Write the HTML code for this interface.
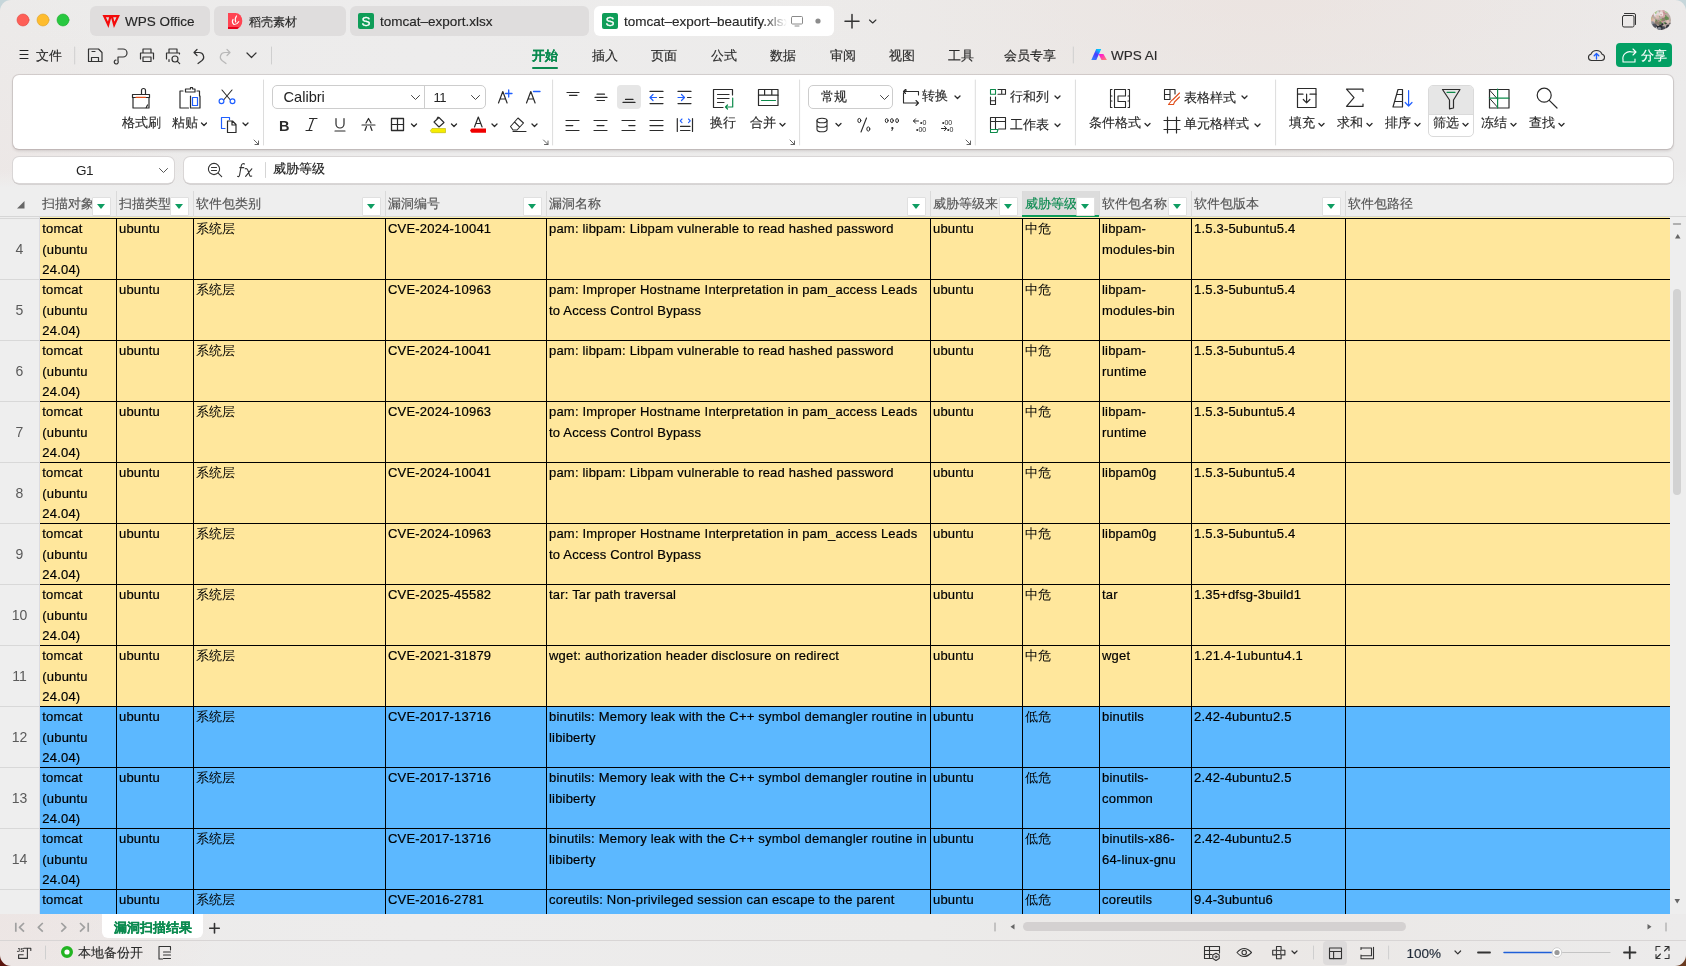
<!DOCTYPE html>
<html><head><meta charset="utf-8">
<style>
*{box-sizing:border-box;margin:0;padding:0}
html,body{width:1686px;height:966px;overflow:hidden}
body{font-family:"Liberation Sans",sans-serif;color:#222;position:relative;background:#c6d6da}
#bgbot{position:absolute;left:0;top:900px;width:1686px;height:66px;background:linear-gradient(90deg,#5a140c,#6a3a20)}
#win{will-change:transform;position:absolute;left:0;top:0;width:1686px;height:966px;border-radius:11px;overflow:hidden;
 background:radial-gradient(ellipse 260px 620px at 0% 62%,rgba(238,214,212,.55),rgba(238,214,212,0)),radial-gradient(ellipse 500px 160px at 75% 0%,rgba(236,224,220,.5),rgba(236,224,220,0)),linear-gradient(90deg,#ecebea 0%,#edecec 25%,#ecebea 55%,#ebe8e6 75%,#ecebeb 100%)}
.a{position:absolute}
.tab{position:absolute;top:6px;height:30px;border-radius:6px;background:#dfdddd}
.tl{position:absolute;top:14px;white-space:nowrap;font-size:13.5px;color:#262626;line-height:16px}
.menu{position:absolute;top:48px;font-size:12.7px;color:#2a2a2a;white-space:nowrap;line-height:16px}
#ribbon{position:absolute;left:13px;top:75px;width:1660px;height:74px;background:#fff;border-radius:6px;box-shadow:0 0 0 1px rgba(60,40,40,.13),0 1.5px 3px rgba(40,20,20,.14)}
.rl{position:absolute;font-size:13px;color:#2a2a2a;white-space:nowrap;line-height:16px}
.sep{position:absolute;width:1px;background:#dcdcdc}
.box{position:absolute;background:#fff;border:1px solid #cdcdcd;border-radius:5px}
.fbox{position:absolute;background:#fff;border-radius:6px;box-shadow:0 0 0 1px #d9d6d6,0 1px 0 .5px #bdbaba}
/* grid */
#grid{position:absolute;left:0;top:170px;width:1686px;height:744px;background:linear-gradient(180deg,rgba(238,238,238,0) 0,#eeeeee 18px)}
.hd{position:absolute;top:191px;height:26px;border-left:1px solid #dadada;font-size:13.3px;color:#555;line-height:16px}
.hd .ht{position:absolute;left:2px;top:5px;white-space:nowrap}
.hd.nb{border-left:none}
.hd.sel{background:#dcdcdc;color:#0a8a4f;-webkit-text-stroke:.3px #0a8a4f}
.hd.sel:after{content:"";position:absolute;left:-1px;right:0;bottom:0;height:2px;background:#0c9a5c}
.hd .fb{z-index:2}
.fb{position:absolute;top:6px;width:18.5px;height:18.5px;margin-left:-.7px;background:#fff;border:1px solid #e0e0e0;border-radius:1px}
.fb i{position:absolute;left:3.8px;top:6px;width:0;height:0;border-left:4.8px solid transparent;border-right:4.8px solid transparent;border-top:5.6px solid #0f9d62}
.rn{position:absolute;left:0;width:39px;border-top:1px solid #d8d8d8;font-size:14px;color:#5a5a5a;display:flex;align-items:center;justify-content:center}
.c{position:absolute;border-top:1px solid #000;border-left:1px solid #000;overflow:hidden}
.c.first{border-left:none}
.c .t.cj{-webkit-text-stroke:0}
.l2{position:relative;top:.4px}
.c.first .t{left:2.3px}
.c.y{background:#ffe79c}
.c.b{background:#5cb8ff}
.c .t{-webkit-text-stroke:.2px #000;position:absolute;left:2px;top:-.2px;font-size:13px;letter-spacing:.2px;line-height:20.6px;color:#000;white-space:nowrap}
.rl,.menu,.tl,.hd .ht{-webkit-text-stroke:.15px currentColor}
svg.ic{position:absolute;left:0;top:0;width:1686px;height:966px;overflow:visible}
</style></head><body><div id="bgbot"></div><div id="win">
<!-- ================= title bar ================= -->
<div class="tab" style="left:90px;width:120px"></div>
<div class="tab" style="left:214px;width:132px"></div>
<div class="tab" style="left:350px;width:239px"></div>
<div class="tab" style="left:594px;width:240px;background:#fff"></div>
<div class="tl" style="left:125px">WPS Office</div>
<div class="tl" style="left:249px;font-size:12.35px;top:14px">稻壳素材</div>
<div class="tl" style="left:380px">tomcat–export.xlsx</div>
<div class="tl" style="left:624px;width:163px;overflow:hidden;-webkit-mask-image:linear-gradient(90deg,#000 85%,transparent)">tomcat–export–beautify.xlsx</div>
<!-- ================= menu row ================= -->
<div class="menu" style="left:36px">文件</div>
<div class="menu" style="left:532px;color:#0a8a4f;font-weight:bold">开始</div>
<div class="a" style="left:532px;top:66.5px;width:26px;height:2.5px;background:#0a8a4f;border-radius:2px"></div>
<div class="menu" style="left:592px">插入</div>
<div class="menu" style="left:651px">页面</div>
<div class="menu" style="left:711px">公式</div>
<div class="menu" style="left:770px">数据</div>
<div class="menu" style="left:830px">审阅</div>
<div class="menu" style="left:889px">视图</div>
<div class="menu" style="left:948px">工具</div>
<div class="menu" style="left:1004px">会员专享</div>
<div class="menu" style="left:1111px;top:47.5px;font-size:13.5px">WPS AI</div>
<div class="a" style="left:1616px;top:43px;width:56px;height:24px;border-radius:4px;background:#03a064"></div>
<div class="menu" style="left:1641px;color:#fff">分享</div>
<!-- ================= ribbon ================= -->
<div id="ribbon"></div>
<div class="box" style="left:272px;top:85px;width:214px;height:24px"></div>
<div class="a" style="left:424px;top:86px;width:1px;height:22px;background:#cdcdcd"></div>
<div class="a" style="left:283.5px;top:88.5px;font-size:14.6px;color:#222">Calibri</div>
<div class="a" style="left:433.5px;top:90px;font-size:13px;color:#222;letter-spacing:-.6px">11</div>
<div class="a" style="left:617px;top:85px;width:24px;height:24px;border-radius:4px;background:#e6e6e6"></div>
<div class="box" style="left:808px;top:85px;width:85px;height:24px"></div>
<div class="rl" style="left:821px;top:89px">常规</div>
<div class="a" style="left:1428px;top:85px;width:46px;height:52px;border-radius:5px;border:1px solid #dadada;overflow:hidden;background:#fff"><div style="height:29px;background:#e6e6e6;border-bottom:1px solid #dadada"></div></div>
<div class="rl" style="left:122px;top:115px">格式刷</div>
<div class="rl" style="left:172px;top:115px">粘贴</div>
<div class="rl" style="left:710px;top:115px">换行</div>
<div class="rl" style="left:750px;top:115px">合并</div>
<div class="rl" style="left:922px;top:88px">转换</div>
<div class="rl" style="left:1010px;top:89px">行和列</div>
<div class="rl" style="left:1010px;top:117px">工作表</div>
<div class="rl" style="left:1089px;top:115px">条件格式</div>
<div class="rl" style="left:1184px;top:89.5px">表格样式</div>
<div class="rl" style="left:1184px;top:116px">单元格样式</div>
<div class="rl" style="left:1289px;top:115px">填充</div>
<div class="rl" style="left:1337px;top:115px">求和</div>
<div class="rl" style="left:1385px;top:115px">排序</div>
<div class="rl" style="left:1433px;top:115px">筛选</div>
<div class="rl" style="left:1481px;top:115px">冻结</div>
<div class="rl" style="left:1529px;top:115px">查找</div>
<div id="grid"></div>
<!-- ================= formula bar ================= -->
<div class="fbox" style="left:13px;top:157px;width:161px;height:26px"></div>
<div class="a" style="left:76px;top:163px;font-size:13.5px;color:#222;letter-spacing:-.5px">G1</div>
<div class="fbox" style="left:184px;top:157px;width:1489px;height:26px"></div>
<div class="rl" style="left:273px;top:161px;font-size:13px;color:#1a1a1a">威胁等级</div>
<!-- ================= grid ================= -->
<div class="a" style="left:0;top:216px;width:1686px;height:1px;background:#d6d6d6"></div>
<div class="a" style="left:0;top:0;width:1686px;height:914px;overflow:hidden">
<div class="hd nb" style="left:40px;width:76px"><span class="ht">扫描对象</span><span class="fb" style="left:53px"><i></i></span></div>
<div class="hd" style="left:116px;width:77px"><span class="ht">扫描类型</span><span class="fb" style="left:54px"><i></i></span></div>
<div class="hd" style="left:193px;width:192px"><span class="ht">软件包类别</span><span class="fb" style="left:169px"><i></i></span></div>
<div class="hd" style="left:385px;width:161px"><span class="ht">漏洞编号</span><span class="fb" style="left:138px"><i></i></span></div>
<div class="hd" style="left:546px;width:384px"><span class="ht">漏洞名称</span><span class="fb" style="left:361px"><i></i></span></div>
<div class="hd" style="left:930px;width:92px"><span class="ht">威胁等级来</span><span class="fb" style="left:69px"><i></i></span></div>
<div class="hd sel" style="left:1022px;width:77px"><span class="ht">威胁等级</span><span class="fb" style="left:54px"><i></i></span></div>
<div class="hd" style="left:1099px;width:92px"><span class="ht">软件包名称</span><span class="fb" style="left:69px"><i></i></span></div>
<div class="hd" style="left:1191px;width:154px"><span class="ht">软件包版本</span><span class="fb" style="left:131px"><i></i></span></div>
<div class="hd" style="left:1345px;width:324px"><span class="ht">软件包路径</span></div>
<div class="rn" style="top:218px;height:61px">4</div>
<div class="c y first" style="left:40px;top:218px;width:76px;height:61px"><div class="t">tomcat<br><span class="l2">(ubuntu</span><br>24.04)</div></div>
<div class="c y" style="left:116px;top:218px;width:77px;height:61px"><div class="t">ubuntu</div></div>
<div class="c y" style="left:193px;top:218px;width:192px;height:61px"><div class="t cj">系统层</div></div>
<div class="c y" style="left:385px;top:218px;width:161px;height:61px"><div class="t">CVE-2024-10041</div></div>
<div class="c y" style="left:546px;top:218px;width:384px;height:61px"><div class="t">pam: libpam: Libpam vulnerable to read hashed password</div></div>
<div class="c y" style="left:930px;top:218px;width:92px;height:61px"><div class="t">ubuntu</div></div>
<div class="c y" style="left:1022px;top:218px;width:77px;height:61px"><div class="t cj">中危</div></div>
<div class="c y" style="left:1099px;top:218px;width:92px;height:61px"><div class="t">libpam-<br><span class="l2">modules-bin</span></div></div>
<div class="c y" style="left:1191px;top:218px;width:154px;height:61px"><div class="t">1.5.3-5ubuntu5.4</div></div>
<div class="c y" style="left:1345px;top:218px;width:325px;height:61px"><div class="t"></div></div>
<div class="rn" style="top:279px;height:61px">5</div>
<div class="c y first" style="left:40px;top:279px;width:76px;height:61px"><div class="t">tomcat<br><span class="l2">(ubuntu</span><br>24.04)</div></div>
<div class="c y" style="left:116px;top:279px;width:77px;height:61px"><div class="t">ubuntu</div></div>
<div class="c y" style="left:193px;top:279px;width:192px;height:61px"><div class="t cj">系统层</div></div>
<div class="c y" style="left:385px;top:279px;width:161px;height:61px"><div class="t">CVE-2024-10963</div></div>
<div class="c y" style="left:546px;top:279px;width:384px;height:61px"><div class="t">pam: Improper Hostname Interpretation in pam_access Leads<br><span class="l2">to Access Control Bypass</span></div></div>
<div class="c y" style="left:930px;top:279px;width:92px;height:61px"><div class="t">ubuntu</div></div>
<div class="c y" style="left:1022px;top:279px;width:77px;height:61px"><div class="t cj">中危</div></div>
<div class="c y" style="left:1099px;top:279px;width:92px;height:61px"><div class="t">libpam-<br><span class="l2">modules-bin</span></div></div>
<div class="c y" style="left:1191px;top:279px;width:154px;height:61px"><div class="t">1.5.3-5ubuntu5.4</div></div>
<div class="c y" style="left:1345px;top:279px;width:325px;height:61px"><div class="t"></div></div>
<div class="rn" style="top:340px;height:61px">6</div>
<div class="c y first" style="left:40px;top:340px;width:76px;height:61px"><div class="t">tomcat<br><span class="l2">(ubuntu</span><br>24.04)</div></div>
<div class="c y" style="left:116px;top:340px;width:77px;height:61px"><div class="t">ubuntu</div></div>
<div class="c y" style="left:193px;top:340px;width:192px;height:61px"><div class="t cj">系统层</div></div>
<div class="c y" style="left:385px;top:340px;width:161px;height:61px"><div class="t">CVE-2024-10041</div></div>
<div class="c y" style="left:546px;top:340px;width:384px;height:61px"><div class="t">pam: libpam: Libpam vulnerable to read hashed password</div></div>
<div class="c y" style="left:930px;top:340px;width:92px;height:61px"><div class="t">ubuntu</div></div>
<div class="c y" style="left:1022px;top:340px;width:77px;height:61px"><div class="t cj">中危</div></div>
<div class="c y" style="left:1099px;top:340px;width:92px;height:61px"><div class="t">libpam-<br><span class="l2">runtime</span></div></div>
<div class="c y" style="left:1191px;top:340px;width:154px;height:61px"><div class="t">1.5.3-5ubuntu5.4</div></div>
<div class="c y" style="left:1345px;top:340px;width:325px;height:61px"><div class="t"></div></div>
<div class="rn" style="top:401px;height:61px">7</div>
<div class="c y first" style="left:40px;top:401px;width:76px;height:61px"><div class="t">tomcat<br><span class="l2">(ubuntu</span><br>24.04)</div></div>
<div class="c y" style="left:116px;top:401px;width:77px;height:61px"><div class="t">ubuntu</div></div>
<div class="c y" style="left:193px;top:401px;width:192px;height:61px"><div class="t cj">系统层</div></div>
<div class="c y" style="left:385px;top:401px;width:161px;height:61px"><div class="t">CVE-2024-10963</div></div>
<div class="c y" style="left:546px;top:401px;width:384px;height:61px"><div class="t">pam: Improper Hostname Interpretation in pam_access Leads<br><span class="l2">to Access Control Bypass</span></div></div>
<div class="c y" style="left:930px;top:401px;width:92px;height:61px"><div class="t">ubuntu</div></div>
<div class="c y" style="left:1022px;top:401px;width:77px;height:61px"><div class="t cj">中危</div></div>
<div class="c y" style="left:1099px;top:401px;width:92px;height:61px"><div class="t">libpam-<br><span class="l2">runtime</span></div></div>
<div class="c y" style="left:1191px;top:401px;width:154px;height:61px"><div class="t">1.5.3-5ubuntu5.4</div></div>
<div class="c y" style="left:1345px;top:401px;width:325px;height:61px"><div class="t"></div></div>
<div class="rn" style="top:462px;height:61px">8</div>
<div class="c y first" style="left:40px;top:462px;width:76px;height:61px"><div class="t">tomcat<br><span class="l2">(ubuntu</span><br>24.04)</div></div>
<div class="c y" style="left:116px;top:462px;width:77px;height:61px"><div class="t">ubuntu</div></div>
<div class="c y" style="left:193px;top:462px;width:192px;height:61px"><div class="t cj">系统层</div></div>
<div class="c y" style="left:385px;top:462px;width:161px;height:61px"><div class="t">CVE-2024-10041</div></div>
<div class="c y" style="left:546px;top:462px;width:384px;height:61px"><div class="t">pam: libpam: Libpam vulnerable to read hashed password</div></div>
<div class="c y" style="left:930px;top:462px;width:92px;height:61px"><div class="t">ubuntu</div></div>
<div class="c y" style="left:1022px;top:462px;width:77px;height:61px"><div class="t cj">中危</div></div>
<div class="c y" style="left:1099px;top:462px;width:92px;height:61px"><div class="t">libpam0g</div></div>
<div class="c y" style="left:1191px;top:462px;width:154px;height:61px"><div class="t">1.5.3-5ubuntu5.4</div></div>
<div class="c y" style="left:1345px;top:462px;width:325px;height:61px"><div class="t"></div></div>
<div class="rn" style="top:523px;height:61px">9</div>
<div class="c y first" style="left:40px;top:523px;width:76px;height:61px"><div class="t">tomcat<br><span class="l2">(ubuntu</span><br>24.04)</div></div>
<div class="c y" style="left:116px;top:523px;width:77px;height:61px"><div class="t">ubuntu</div></div>
<div class="c y" style="left:193px;top:523px;width:192px;height:61px"><div class="t cj">系统层</div></div>
<div class="c y" style="left:385px;top:523px;width:161px;height:61px"><div class="t">CVE-2024-10963</div></div>
<div class="c y" style="left:546px;top:523px;width:384px;height:61px"><div class="t">pam: Improper Hostname Interpretation in pam_access Leads<br><span class="l2">to Access Control Bypass</span></div></div>
<div class="c y" style="left:930px;top:523px;width:92px;height:61px"><div class="t">ubuntu</div></div>
<div class="c y" style="left:1022px;top:523px;width:77px;height:61px"><div class="t cj">中危</div></div>
<div class="c y" style="left:1099px;top:523px;width:92px;height:61px"><div class="t">libpam0g</div></div>
<div class="c y" style="left:1191px;top:523px;width:154px;height:61px"><div class="t">1.5.3-5ubuntu5.4</div></div>
<div class="c y" style="left:1345px;top:523px;width:325px;height:61px"><div class="t"></div></div>
<div class="rn" style="top:584px;height:61px">10</div>
<div class="c y first" style="left:40px;top:584px;width:76px;height:61px"><div class="t">tomcat<br><span class="l2">(ubuntu</span><br>24.04)</div></div>
<div class="c y" style="left:116px;top:584px;width:77px;height:61px"><div class="t">ubuntu</div></div>
<div class="c y" style="left:193px;top:584px;width:192px;height:61px"><div class="t cj">系统层</div></div>
<div class="c y" style="left:385px;top:584px;width:161px;height:61px"><div class="t">CVE-2025-45582</div></div>
<div class="c y" style="left:546px;top:584px;width:384px;height:61px"><div class="t">tar: Tar path traversal</div></div>
<div class="c y" style="left:930px;top:584px;width:92px;height:61px"><div class="t">ubuntu</div></div>
<div class="c y" style="left:1022px;top:584px;width:77px;height:61px"><div class="t cj">中危</div></div>
<div class="c y" style="left:1099px;top:584px;width:92px;height:61px"><div class="t">tar</div></div>
<div class="c y" style="left:1191px;top:584px;width:154px;height:61px"><div class="t">1.35+dfsg-3build1</div></div>
<div class="c y" style="left:1345px;top:584px;width:325px;height:61px"><div class="t"></div></div>
<div class="rn" style="top:645px;height:61px">11</div>
<div class="c y first" style="left:40px;top:645px;width:76px;height:61px"><div class="t">tomcat<br><span class="l2">(ubuntu</span><br>24.04)</div></div>
<div class="c y" style="left:116px;top:645px;width:77px;height:61px"><div class="t">ubuntu</div></div>
<div class="c y" style="left:193px;top:645px;width:192px;height:61px"><div class="t cj">系统层</div></div>
<div class="c y" style="left:385px;top:645px;width:161px;height:61px"><div class="t">CVE-2021-31879</div></div>
<div class="c y" style="left:546px;top:645px;width:384px;height:61px"><div class="t">wget: authorization header disclosure on redirect</div></div>
<div class="c y" style="left:930px;top:645px;width:92px;height:61px"><div class="t">ubuntu</div></div>
<div class="c y" style="left:1022px;top:645px;width:77px;height:61px"><div class="t cj">中危</div></div>
<div class="c y" style="left:1099px;top:645px;width:92px;height:61px"><div class="t">wget</div></div>
<div class="c y" style="left:1191px;top:645px;width:154px;height:61px"><div class="t">1.21.4-1ubuntu4.1</div></div>
<div class="c y" style="left:1345px;top:645px;width:325px;height:61px"><div class="t"></div></div>
<div class="rn" style="top:706px;height:61px">12</div>
<div class="c b first" style="left:40px;top:706px;width:76px;height:61px"><div class="t">tomcat<br><span class="l2">(ubuntu</span><br>24.04)</div></div>
<div class="c b" style="left:116px;top:706px;width:77px;height:61px"><div class="t">ubuntu</div></div>
<div class="c b" style="left:193px;top:706px;width:192px;height:61px"><div class="t cj">系统层</div></div>
<div class="c b" style="left:385px;top:706px;width:161px;height:61px"><div class="t">CVE-2017-13716</div></div>
<div class="c b" style="left:546px;top:706px;width:384px;height:61px"><div class="t">binutils: Memory leak with the C++ symbol demangler routine in<br><span class="l2">libiberty</span></div></div>
<div class="c b" style="left:930px;top:706px;width:92px;height:61px"><div class="t">ubuntu</div></div>
<div class="c b" style="left:1022px;top:706px;width:77px;height:61px"><div class="t cj">低危</div></div>
<div class="c b" style="left:1099px;top:706px;width:92px;height:61px"><div class="t">binutils</div></div>
<div class="c b" style="left:1191px;top:706px;width:154px;height:61px"><div class="t">2.42-4ubuntu2.5</div></div>
<div class="c b" style="left:1345px;top:706px;width:325px;height:61px"><div class="t"></div></div>
<div class="rn" style="top:767px;height:61px">13</div>
<div class="c b first" style="left:40px;top:767px;width:76px;height:61px"><div class="t">tomcat<br><span class="l2">(ubuntu</span><br>24.04)</div></div>
<div class="c b" style="left:116px;top:767px;width:77px;height:61px"><div class="t">ubuntu</div></div>
<div class="c b" style="left:193px;top:767px;width:192px;height:61px"><div class="t cj">系统层</div></div>
<div class="c b" style="left:385px;top:767px;width:161px;height:61px"><div class="t">CVE-2017-13716</div></div>
<div class="c b" style="left:546px;top:767px;width:384px;height:61px"><div class="t">binutils: Memory leak with the C++ symbol demangler routine in<br><span class="l2">libiberty</span></div></div>
<div class="c b" style="left:930px;top:767px;width:92px;height:61px"><div class="t">ubuntu</div></div>
<div class="c b" style="left:1022px;top:767px;width:77px;height:61px"><div class="t cj">低危</div></div>
<div class="c b" style="left:1099px;top:767px;width:92px;height:61px"><div class="t">binutils-<br><span class="l2">common</span></div></div>
<div class="c b" style="left:1191px;top:767px;width:154px;height:61px"><div class="t">2.42-4ubuntu2.5</div></div>
<div class="c b" style="left:1345px;top:767px;width:325px;height:61px"><div class="t"></div></div>
<div class="rn" style="top:828px;height:61px">14</div>
<div class="c b first" style="left:40px;top:828px;width:76px;height:61px"><div class="t">tomcat<br><span class="l2">(ubuntu</span><br>24.04)</div></div>
<div class="c b" style="left:116px;top:828px;width:77px;height:61px"><div class="t">ubuntu</div></div>
<div class="c b" style="left:193px;top:828px;width:192px;height:61px"><div class="t cj">系统层</div></div>
<div class="c b" style="left:385px;top:828px;width:161px;height:61px"><div class="t">CVE-2017-13716</div></div>
<div class="c b" style="left:546px;top:828px;width:384px;height:61px"><div class="t">binutils: Memory leak with the C++ symbol demangler routine in<br><span class="l2">libiberty</span></div></div>
<div class="c b" style="left:930px;top:828px;width:92px;height:61px"><div class="t">ubuntu</div></div>
<div class="c b" style="left:1022px;top:828px;width:77px;height:61px"><div class="t cj">低危</div></div>
<div class="c b" style="left:1099px;top:828px;width:92px;height:61px"><div class="t">binutils-x86-<br><span class="l2">64-linux-gnu</span></div></div>
<div class="c b" style="left:1191px;top:828px;width:154px;height:61px"><div class="t">2.42-4ubuntu2.5</div></div>
<div class="c b" style="left:1345px;top:828px;width:325px;height:61px"><div class="t"></div></div>
<div class="rn" style="top:889px;height:25px"></div>
<div class="c b first" style="left:40px;top:889px;width:76px;height:25px"><div class="t">tomcat<br><span class="l2">(ubuntu</span><br>24.04)</div></div>
<div class="c b" style="left:116px;top:889px;width:77px;height:25px"><div class="t">ubuntu</div></div>
<div class="c b" style="left:193px;top:889px;width:192px;height:25px"><div class="t cj">系统层</div></div>
<div class="c b" style="left:385px;top:889px;width:161px;height:25px"><div class="t">CVE-2016-2781</div></div>
<div class="c b" style="left:546px;top:889px;width:384px;height:25px"><div class="t">coreutils: Non-privileged session can escape to the parent</div></div>
<div class="c b" style="left:930px;top:889px;width:92px;height:25px"><div class="t">ubuntu</div></div>
<div class="c b" style="left:1022px;top:889px;width:77px;height:25px"><div class="t cj">低危</div></div>
<div class="c b" style="left:1099px;top:889px;width:92px;height:25px"><div class="t">coreutils</div></div>
<div class="c b" style="left:1191px;top:889px;width:154px;height:25px"><div class="t">9.4-3ubuntu6</div></div>
<div class="c b" style="left:1345px;top:889px;width:325px;height:25px"><div class="t"></div></div>
</div>
<div class="a" style="left:39px;top:217px;width:1px;height:697px;background:#dcdce2"></div>
<div class="a" style="left:40px;top:217px;width:1629px;height:1px;background:#fff0a8"></div>
<div class="a" style="left:1673px;top:289px;width:8px;height:206px;border-radius:4px;background:#d2d2d2"></div>
<!-- ================= bottom bars ================= -->
<div class="a" style="left:1023px;top:922px;width:383px;height:9px;border-radius:4.5px;background:#d4d1d1"></div>
<div class="a" style="left:102px;top:914px;width:101px;height:24px;background:#fff;border-radius:0 0 6px 6px"></div>
<div class="rl" style="left:114px;top:920px;color:#0a8a4f;font-weight:bold">漏洞扫描结果</div>
<div class="a" style="left:0;top:940px;width:1686px;height:1px;background:#d8d5d5"></div>
<div class="rl" style="left:78px;top:945px">本地备份开</div>
<div class="a" style="left:1323px;top:941px;width:24px;height:24px;border-radius:4px;background:#dddbdb"></div>
<div class="rl" style="left:1406.5px;top:945.5px;font-size:13.5px;color:#1f2937">100%</div>
<svg class="ic" viewBox="0 0 1686 966" fill="none" stroke="#2b2b2b" stroke-width="1.2" stroke-linecap="round" stroke-linejoin="round">
<!-- traffic lights -->
<circle cx="23" cy="20" r="6" fill="#fe5f57" stroke="#e0443e" stroke-width=".6"/>
<circle cx="43" cy="20" r="6" fill="#febc2e" stroke="#dea123" stroke-width=".6"/>
<circle cx="63" cy="20" r="6" fill="#28c840" stroke="#1aab29" stroke-width=".6"/>
<!-- WPS logo -->
<path d="M104.2 16.2 h6.3 l-2.3 8.6 z M111.8 16.2 h6.4 l-4 8.6 z" stroke="#f40b0b" stroke-width="2.2" stroke-linejoin="miter"/>
<!-- daoke -->
<path d="M228 13 h7.5 a6.8 8 0 0 1 0 16 h-7.5 z" fill="#ff4452" stroke="none"/><path d="M228 27 h11 l-1.5 2 h-9.5 z" fill="#e8001a" stroke="none"/><path d="M236.5 16 c-1.5 2 -1.5 4 -0.8 6 M233 19.5 c-1 1.5 -0.5 3.5 0.8 4.8 M234.2 24.5 c1.8 0 3.5 -1.2 4.5 -2.8" stroke="#fff" stroke-width="1.2"/>
<!-- S icons -->
<rect x="358" y="13" width="16" height="16" rx="2" fill="#0f9d58" stroke="none"/>
<rect x="602" y="13" width="16" height="16" rx="2" fill="#0f9d58" stroke="none"/>
<text x="366" y="25.5" font-family="Liberation Sans" font-size="13.5" fill="#fff" stroke="#fff" stroke-width=".3" text-anchor="middle">S</text>
<text x="610" y="25.5" font-family="Liberation Sans" font-size="13.5" fill="#fff" stroke="#fff" stroke-width=".3" text-anchor="middle">S</text>
<!-- monitor + dot -->
<rect x="791.5" y="16.5" width="11" height="7.5" rx="1" stroke="#8a8a8a" stroke-width="1"/>
<path d="M795 26 h4" stroke="#8a8a8a" stroke-width="1"/>
<circle cx="818" cy="21" r="2.6" fill="#8c8c8c" stroke="none"/>
<!-- plus chevron -->
<path d="M852 14.5 v13.5 M845 21.2 h14" stroke="#333" stroke-width="1.5"/>
<path d="M869.5 20 l3.2 3 l3.2 -3" stroke="#333" stroke-width="1.1"/>
<!-- window icon -->
<rect x="1622.5" y="15.5" width="11.5" height="11.5" rx="1.5" stroke="#333" stroke-width="1"/>
<path d="M1624.5 13.5 h9.5 a1.5 1.5 0 0 1 1.5 1.5 v9.5" stroke="#333" stroke-width="1"/>
<!-- avatar -->
<defs><clipPath id="avc"><circle cx="1661" cy="20" r="10"/></clipPath></defs><g clip-path="url(#avc)" stroke="none"><rect x="1650" y="9" width="22" height="22" fill="#b9a9a2"/><circle cx="1655.8" cy="20.9" r="1.4" fill="#5e8a4a" opacity=".9"/><circle cx="1660.5" cy="21.6" r="1.8" fill="#e0c0b8" opacity=".9"/><circle cx="1656.2" cy="14.7" r="2.4" fill="#f2e6e6" opacity=".9"/><circle cx="1661.8" cy="21.0" r="1.4" fill="#c98a8a" opacity=".9"/><circle cx="1655.6" cy="13.0" r="2.3" fill="#f2e6e6" opacity=".9"/><circle cx="1665.8" cy="23.4" r="0.9" fill="#1f2228" opacity=".9"/><circle cx="1651.9" cy="25.6" r="2.1" fill="#8a8f99" opacity=".9"/><circle cx="1660.5" cy="24.4" r="2.2" fill="#6a6560" opacity=".9"/><circle cx="1666.8" cy="18.5" r="2.0" fill="#5e8a4a" opacity=".9"/><circle cx="1659.9" cy="28.7" r="2.2" fill="#2e3038" opacity=".9"/><circle cx="1651.7" cy="19.9" r="1.2" fill="#d9b6a0" opacity=".9"/><circle cx="1659.7" cy="22.5" r="1.3" fill="#5e8a4a" opacity=".9"/><circle cx="1667.7" cy="21.5" r="1.7" fill="#e0c0b8" opacity=".9"/><circle cx="1662.7" cy="28.1" r="1.9" fill="#2e3038" opacity=".9"/><circle cx="1668.1" cy="29.8" r="1.9" fill="#4a4e58" opacity=".9"/><circle cx="1665.0" cy="16.5" r="1.7" fill="#5e8a4a" opacity=".9"/><circle cx="1662.4" cy="24.3" r="1.1" fill="#1f2228" opacity=".9"/><circle cx="1656.3" cy="12.5" r="1.6" fill="#9cc07a" opacity=".9"/><circle cx="1670.8" cy="11.8" r="2.1" fill="#f2e6e6" opacity=".9"/><circle cx="1668.9" cy="10.4" r="1.5" fill="#f2e6e6" opacity=".9"/><circle cx="1668.5" cy="10.9" r="1.8" fill="#e9d3d2" opacity=".9"/><circle cx="1658.6" cy="21.7" r="1.7" fill="#8a7a6a" opacity=".9"/><circle cx="1661.1" cy="30.0" r="1.3" fill="#2e3038" opacity=".9"/><circle cx="1653.2" cy="20.7" r="2.3" fill="#e0c0b8" opacity=".9"/><circle cx="1656.8" cy="15.3" r="1.9" fill="#cfe5e8" opacity=".9"/><circle cx="1657.3" cy="29.2" r="2.2" fill="#c9ccd2" opacity=".9"/><circle cx="1658.5" cy="27.4" r="1.4" fill="#1f2228" opacity=".9"/><circle cx="1664.6" cy="12.1" r="2.4" fill="#c78f92" opacity=".9"/><circle cx="1656.4" cy="22.7" r="1.9" fill="#8a7a6a" opacity=".9"/><circle cx="1659.7" cy="15.2" r="1.3" fill="#cfe5e8" opacity=".9"/><circle cx="1651.2" cy="18.3" r="1.7" fill="#7fae5a" opacity=".9"/><circle cx="1658.5" cy="21.8" r="1.0" fill="#d9b6a0" opacity=".9"/><circle cx="1663.5" cy="19.3" r="1.9" fill="#8a7a6a" opacity=".9"/><circle cx="1663.2" cy="15.6" r="1.6" fill="#c78f92" opacity=".9"/><circle cx="1652.2" cy="23.5" r="2.3" fill="#8a8f99" opacity=".9"/><circle cx="1663.6" cy="16.0" r="1.8" fill="#d8a9ab" opacity=".9"/><circle cx="1658.3" cy="16.3" r="1.4" fill="#5e8a4a" opacity=".9"/><circle cx="1656.3" cy="25.7" r="1.0" fill="#2e3038" opacity=".9"/><circle cx="1670.4" cy="23.7" r="1.0" fill="#1f2228" opacity=".9"/><circle cx="1655.5" cy="26.1" r="1.2" fill="#4a4e58" opacity=".9"/><circle cx="1664.6" cy="23.0" r="1.0" fill="#5e8a4a" opacity=".9"/><circle cx="1657.4" cy="16.7" r="2.1" fill="#e0c0b8" opacity=".9"/><circle cx="1667.2" cy="29.2" r="0.9" fill="#6a6560" opacity=".9"/><circle cx="1664.0" cy="27.7" r="1.5" fill="#4a4e58" opacity=".9"/><circle cx="1666.7" cy="10.7" r="2.3" fill="#cfe5e8" opacity=".9"/><circle cx="1667.1" cy="26.8" r="1.1" fill="#8a8f99" opacity=".9"/><circle cx="1657.8" cy="26.6" r="0.9" fill="#1f2228" opacity=".9"/><circle cx="1657.9" cy="12.6" r="1.3" fill="#cfe5e8" opacity=".9"/><circle cx="1660.3" cy="22.7" r="1.3" fill="#5e8a4a" opacity=".9"/><circle cx="1659.2" cy="28.4" r="1.0" fill="#2e3038" opacity=".9"/><circle cx="1660.5" cy="26.7" r="1.8" fill="#1f2228" opacity=".9"/><circle cx="1659.7" cy="29.0" r="2.3" fill="#4a4e58" opacity=".9"/><circle cx="1651.6" cy="19.1" r="2.0" fill="#d9b6a0" opacity=".9"/><circle cx="1661.4" cy="15.8" r="1.3" fill="#d8a9ab" opacity=".9"/><circle cx="1668.2" cy="27.2" r="2.4" fill="#2e3038" opacity=".9"/><circle cx="1667.2" cy="10.9" r="2.2" fill="#9cc07a" opacity=".9"/><circle cx="1661.2" cy="14.0" r="2.2" fill="#f2e6e6" opacity=".9"/><circle cx="1662.5" cy="10.3" r="2.0" fill="#d8a9ab" opacity=".9"/><circle cx="1661.1" cy="14.8" r="0.8" fill="#c78f92" opacity=".9"/><circle cx="1659.3" cy="28.8" r="1.8" fill="#8a8f99" opacity=".9"/><circle cx="1653.5" cy="29.4" r="1.7" fill="#2e3038" opacity=".9"/><circle cx="1658.0" cy="13.9" r="1.7" fill="#e9d3d2" opacity=".9"/><circle cx="1654.4" cy="25.8" r="2.3" fill="#4a4e58" opacity=".9"/><circle cx="1667.5" cy="10.2" r="1.8" fill="#f2e6e6" opacity=".9"/><circle cx="1652.0" cy="15.4" r="1.2" fill="#c78f92" opacity=".9"/><circle cx="1661.4" cy="11.0" r="1.3" fill="#e9d3d2" opacity=".9"/><circle cx="1668.1" cy="25.5" r="0.9" fill="#2e3038" opacity=".9"/><circle cx="1652.4" cy="29.5" r="2.2" fill="#2e3038" opacity=".9"/><circle cx="1661.3" cy="19.8" r="1.1" fill="#7fae5a" opacity=".9"/><circle cx="1658.0" cy="22.9" r="1.7" fill="#8a7a6a" opacity=".9"/></g>
<!-- menu row icons -->
<path d="M20 50.5 h8 M20 54.5 h8 M20 58.5 h8" stroke="#222" stroke-width="1"/>
<path d="M74.7 47 v17" stroke="#cfcfcf" stroke-width="1"/>
<path d="M88.5 49 h10 l3.5 3.5 v9 h-13.5 z" stroke="#333"/>
<path d="M91.5 61.5 v-4 h7 v4 M92 51.5 h3" stroke="#333"/>
<path d="M118 49 h5 a4 4 0 0 1 0 8 h-5 v4 a2 2 0 1 1 -2 -1" stroke="#333"/>
<path d="M143 53 v-4 h8 v4 M140.5 59 v-6 h13 v6 M143 61.5 v-4.5 h8 v4.5 z" stroke="#333"/>
<path d="M169 53 v-4 h8 v4 M166.5 59 v-6 h13 v1 M169 61.5 v-2" stroke="#333"/>
<circle cx="175" cy="59" r="3" stroke="#333"/><path d="M177.2 61.2 l2.5 2.5" stroke="#333"/>
<path d="M197 49.5 l-3 3 l3 3 M194 52.5 h5 a4.5 4.5 0 0 1 3 8 l-4 3" stroke="#333"/>
<path d="M227 49.5 l3 3 l-3 3 M230 52.5 h-5 a4.5 4.5 0 0 0 -3 8 l4 3" stroke="#b8b8b8"/>
<path d="M247 53 l4.5 4.5 l4.5 -4.5" stroke="#333"/>
<path d="M271.5 47 v17" stroke="#cfcfcf" stroke-width="1"/>
<path d="M1073.3 47 v16" stroke="#cfcfcf" stroke-width="1"/>
<!-- WPS AI logo -->
<defs><linearGradient id="ai" x1="0" y1="0" x2="1" y2="1"><stop offset="0" stop-color="#3b5bff"/><stop offset=".5" stop-color="#a23bff"/><stop offset="1" stop-color="#ff3b8a"/></linearGradient></defs>
<defs><linearGradient id="aib" x1="0" y1="1" x2=".6" y2="0"><stop offset="0" stop-color="#2f8bff"/><stop offset=".6" stop-color="#4a3bff"/><stop offset="1" stop-color="#00c2ff"/></linearGradient><linearGradient id="aip" x1="0" y1="0" x2="1" y2="1"><stop offset="0" stop-color="#ff00e6"/><stop offset="1" stop-color="#ff8a6a"/></linearGradient></defs>
<path d="M1091.3 60 L1096.2 49 L1101.2 49 L1096.3 60 Z" fill="url(#aib)" stroke="none"/>
<path d="M1098.6 54 L1103.4 54 L1106.9 60 L1101.5 60 Z" fill="url(#aip)" stroke="none"/>
<!-- cloud -->
<path d="M1591.5 60.5 h10 a3.2 3.2 0 0 0 .6 -6.3 a6.1 6.1 0 0 0 -11.2 0 a3.2 3.2 0 0 0 .6 6.3 z" stroke="#333" stroke-width="1.1"/>
<path d="M1596.5 59 v-5.5 M1594.2 55.8 l2.3 -2.3 l2.3 2.3" stroke="#1f5fff" stroke-width="1.3"/>
<!-- share icon -->
<path d="M1623 59 v3 h12 v-3 M1623 60 a7 7 0 0 1 9 -8 h4 M1633 49 l3 3 l-3 3" stroke="#fff" stroke-width="1.1"/>

<!-- ===== ribbon icons ===== -->
<!-- format brush -->
<path d="M141.5 94 v-3.5 a2 2 0 0 1 4 0 v3.5 M132.5 94.5 h17 v3 h-17 z M133 97.5 v10.5 h16 v-10.5 M146 108 l1.5 -3" stroke="#2b2b2b"/>
<path d="M136 97.3 h9.5" stroke="#e04e1b" stroke-width="1.3"/>
<!-- paste -->
<path d="M183 91 h-3 v17 h8.5 M197 91 h2.5 v5 M185.5 89 h5 v-1.5 h2 v1.5 h2.5 v3 h-9.5 z" stroke="#2b2b2b"/>
<path d="M190.5 96 v12 h9.5 v-12" stroke="#2b2b2b"/>
<rect x="192.5" y="97.5" width="5" height="8" stroke="#1f5fff"/>
<!-- scissors -->
<path d="M222 90 l8 9.5 M232 90 l-8 9.5" stroke="#2b2b2b" stroke-width="1.1"/>
<circle cx="221.5" cy="101.2" r="2.4" stroke="#1f5fff"/><circle cx="232.5" cy="101.2" r="2.4" stroke="#1f5fff"/>
<!-- copy -->
<path d="M225 128.5 h-3.5 v-11 h8 v2" stroke="#1f5fff"/>
<path d="M227.5 121 h5 l3.5 3.5 v8 h-8.5 z M232 121 v4 h4" stroke="#2b2b2b"/>
<path d="M201.5 123 l2.5 2.5 l2.5 -2.5 M243 123 l2.5 2.5 l2.5 -2.5" stroke="#2b2b2b" stroke-width="1.3"/>
<path d="M254 140 l4.5 4.5 M258.5 141 v3.5 h-3.5" stroke="#555" stroke-width=".9"/>
<path d="M263.5 80 v65" stroke="#dcdcdc" stroke-width="1"/>
<!-- font box chevrons -->
<path d="M411.5 95.5 l4 4 l4 -4 M471.5 95.5 l4 4 l4 -4" stroke="#444" stroke-width="1"/>
<!-- A+ A- -->
<path d="M498.5 103 l4.3 -11.5 l4.3 11.5 M500.3 99 h5" stroke="#2b2b2b"/>
<path d="M505.5 93.5 h6.5 M508.7 90 v7" stroke="#1f5fff" stroke-width="1.3"/>
<path d="M526.5 103 l4.3 -11.5 l4.3 11.5 M528.3 99 h5" stroke="#2b2b2b"/>
<path d="M533.5 91.5 h6.5" stroke="#1f5fff" stroke-width="1.3"/>
<!-- B I U S border -->
<text x="279" y="130.5" font-family="Liberation Sans" font-size="14.5" font-weight="bold" fill="#2b2b2b" stroke="none">B</text>
<path d="M309.5 118.5 h7.5 M306 130.5 h6 M313.5 118.5 l-4.5 12" stroke="#2b2b2b"/>
<path d="M336 118.5 v5.5 a4 4 0 0 0 8 0 v-5.5 M335 131 h10" stroke="#2b2b2b"/>
<path d="M362 125 h13 M365 130.5 l1.5-4 M372 130.5 l-1.5-4 M366 123 l2.5 -4.5 l2.5 4.5" stroke="#2b2b2b"/>
<rect x="391.5" y="118.5" width="12" height="12" stroke="#2b2b2b" stroke-width="1.3"/>
<path d="M397.5 118.5 v12 M391.5 124.5 h12" stroke="#2b2b2b" stroke-width="1.2"/>
<path d="M411.5 124 l2.5 2.5 l2.5 -2.5 M451.5 124 l2.5 2.5 l2.5 -2.5 M492 124 l2.5 2.5 l2.5 -2.5 M532 124 l2.5 2.5 l2.5 -2.5" stroke="#2b2b2b" stroke-width="1.3"/>
<!-- fill color -->
<path d="M434 122 l5 -4.5 l5 5 l-5 4.5 z M437 118.5 l1 -1.5" stroke="#2b2b2b" stroke-width="1.1"/>
<path d="M430.5 130.5 l1.5 -2 h13.5 v4.2 h-13.5 z" fill="#f5ec00" stroke="#b8b000" stroke-width=".6"/>
<!-- font color -->
<path d="M474.5 127 l3.8 -10 l3.8 10 M476 123.5 h4.5" stroke="#2b2b2b"/>
<path d="M470 130.5 l1.5 -2 h14.5 v4.2 h-14.5 z" fill="#f00000" stroke="none"/>
<!-- eraser -->
<path d="M510.5 126.5 l7.5 -8.5 l5.5 5 l-6.5 7 h-4 z M514.5 122 l5 4.8 M513 131.5 h13" stroke="#2b2b2b" stroke-width="1.1"/>
<path d="M543.5 140 l4.5 4.5 M548 141 v3.5 h-3.5" stroke="#555" stroke-width=".9"/>
<path d="M552.6 80 v65" stroke="#dcdcdc" stroke-width="1"/>
<!-- alignment row1 -->
<path d="M567 92.5 h12 M569.5 95.3 h7.5" stroke="#2b2b2b"/>
<path d="M597 94.2 h7.5 M595 97.4 h12 M597 100.5 h7.5" stroke="#2b2b2b"/>
<path d="M625.5 99.4 h7.5 M623 102.4 h12" stroke="#2b2b2b"/>
<path d="M650 91.4 h13 M659.5 97.5 h3.5 M650 103.6 h13" stroke="#2b2b2b"/>
<path d="M656.5 97.5 h-6 M653 94.5 l-3 3 l3 3" stroke="#1f5fff" stroke-width="1.2"/>
<path d="M678 91.4 h13 M687.5 97.5 h3.5 M678 103.6 h13" stroke="#2b2b2b"/>
<path d="M678 97.5 h6.5 M681.5 94.5 l3 3 l-3 3" stroke="#1f5fff" stroke-width="1.2"/>
<!-- alignment row2 -->
<path d="M566 120.5 h13 M566 125.6 h6.8 M566 130.5 h13" stroke="#2b2b2b"/>
<path d="M594 120.5 h13 M597 125.6 h7 M594 130.5 h13" stroke="#2b2b2b"/>
<path d="M622 120.5 h13 M628.8 125.6 h6.2 M622 130.5 h13" stroke="#2b2b2b"/>
<path d="M650 120.5 h13 M650 125.6 h13 M650 130.5 h13" stroke="#2b2b2b"/>
<path d="M677.3 118.5 v13 M692.5 118.5 v13 M680.5 126.4 h9.5 M680.5 130.5 h9.5" stroke="#2b2b2b"/>
<path d="M682 119 l-1.8 1.8 l1.8 1.8 M688.5 119 l1.8 1.8 l-1.8 1.8" stroke="#1f5fff" stroke-width="1.1"/>
<!-- wrap -->
<path d="M732.5 95 v-5.5 h-19 v18 h9.5 M717.5 94.5 h11.5 M717.5 98.5 h11.5 M717.5 102.5 h6.5" stroke="#2b2b2b"/>
<path d="M732.7 98 v9 h-7 M727.5 105 l-2 2 l2 2" stroke="#0c8a4a" stroke-width="1.2"/>
<!-- merge -->
<rect x="758.5" y="89.5" width="19.5" height="16" stroke="#2b2b2b"/>
<path d="M758.5 95.2 h19.5 M764.6 89.5 v5.7 M771.8 89.5 v5.7" stroke="#2b2b2b"/>
<path d="M761.5 100.5 h14" stroke="#0c8a4a" stroke-width="1.2"/>
<path d="M780 123.5 l2.5 2.5 l2.5 -2.5" stroke="#2b2b2b" stroke-width="1.3"/>
<path d="M790 140 l4.5 4.5 M794.5 141 v3.5 h-3.5" stroke="#555" stroke-width=".9"/>
<path d="M799.6 80 v65" stroke="#dcdcdc" stroke-width="1"/>
<!-- number format -->
<path d="M880.5 95.5 l4 4 l4 -4" stroke="#444" stroke-width="1"/>
<path d="M906 91.5 v-2 M903.5 91.5 h15 v3.5 M903.5 93 v10 h15 M916 100.5 l2.5 2.5 l-2.5 2.5 M905.5 89.5 l-2 2 l2 2" stroke="#2b2b2b" stroke-width="1.1"/>
<path d="M955 96 l2.5 2.5 l2.5 -2.5" stroke="#2b2b2b" stroke-width="1.3"/>
<ellipse cx="822" cy="120.5" rx="5" ry="2.3" stroke="#2b2b2b" stroke-width="1.1"/>
<path d="M817 120.5 v9 a5 2.3 0 0 0 10 0 v-9 M817 125 a5 2.3 0 0 0 10 0" stroke="#2b2b2b" stroke-width="1.1"/>
<path d="M836 123.5 l2.5 2.5 l2.5 -2.5" stroke="#2b2b2b" stroke-width="1.3"/>
<ellipse cx="859.3" cy="120.5" rx="1.5" ry="2.1" stroke="#2b2b2b" stroke-width="1"/>
<ellipse cx="868.3" cy="129" rx="1.5" ry="2.1" stroke="#2b2b2b" stroke-width="1"/>
<path d="M866.5 118 l-5.5 14" stroke="#2b2b2b" stroke-width="1.1"/>
<ellipse cx="886.7" cy="120.6" rx="1.4" ry="2" stroke="#2b2b2b" stroke-width="1"/>
<ellipse cx="891.9" cy="120.6" rx="1.4" ry="2" stroke="#2b2b2b" stroke-width="1"/>
<ellipse cx="897.1" cy="120.6" rx="1.4" ry="2" stroke="#2b2b2b" stroke-width="1"/>
<circle cx="892.3" cy="128" r="1.1" fill="#2b2b2b" stroke="none"/><path d="M892.8 128.3 l-.9 2.2" stroke="#2b2b2b" stroke-width="1"/>
<text x="920" y="125" font-family="Liberation Sans" font-size="7" fill="#2b2b2b" stroke="none">•0</text>
<text x="916" y="132" font-family="Liberation Sans" font-size="7" fill="#2b2b2b" stroke="none">•00</text>
<path d="M918.5 121 h-5 M915.5 118.8 l-2 2.2 l2 2.2" stroke="#2b2b2b" stroke-width="1"/>
<text x="942" y="125" font-family="Liberation Sans" font-size="7" fill="#2b2b2b" stroke="none">•00</text>
<text x="947" y="132" font-family="Liberation Sans" font-size="7" fill="#2b2b2b" stroke="none">•0</text>
<path d="M941.5 128.5 h5 M944.5 126.3 l2 2.2 l-2 2.2" stroke="#2b2b2b" stroke-width="1"/>
<path d="M966 140 l4.5 4.5 M970.5 141 v3.5 h-3.5" stroke="#555" stroke-width=".9"/>
<path d="M975.3 80 v65" stroke="#dcdcdc" stroke-width="1"/>
<!-- rows & cols -->
<rect x="990.5" y="89.5" width="5" height="4.8" stroke="#0c8a4a" stroke-width="1.1"/>
<path d="M998 89.5 h7.5 v4.8 h-7.5 M1001.7 89.5 v4.8 M990.5 97 v7.5 h5 v-7.5 M990.5 100.7 h5" stroke="#2b2b2b" stroke-width="1.1"/>
<path d="M1055 96 l2.5 2.5 l2.5 -2.5 M1055 124 l2.5 2.5 l2.5 -2.5" stroke="#2b2b2b" stroke-width="1.3"/>
<path d="M990.5 129 v-11.5 h15 v11.5 h-7 M990.5 121.5 h15 M995.5 117.5 v11.5" stroke="#2b2b2b" stroke-width="1.1"/>
<path d="M990.5 129.5 v3 h6.5 l1 -3 z" stroke="#0c8a4a" stroke-width="1.1"/>
<path d="M1075.4 80 v65" stroke="#dcdcdc" stroke-width="1"/>
<!-- conditional format -->
<path d="M1112 89.5 h-1.5 v18 h1.5 M1128 89.5 h1.5 v18 h-1.5 M1110.5 96 h1.5 M1110.5 101 h1.5 M1128 96 h1.5 M1128 101 h1.5" stroke="#2b2b2b" stroke-width="1.1"/>
<path d="M1114.5 89.5 h11 v6.5 h-7.5 v5.5 h7.5 v6 h-11 z" stroke="#2b2b2b" stroke-width="1.1"/>
<path d="M1145 123.5 l2.5 2.5 l2.5 -2.5" stroke="#2b2b2b" stroke-width="1.3"/>
<!-- table style -->
<path d="M1170 99.5 h-5.5 v-10 h10.5 v4.5 M1164.5 94.5 h5.5 M1170 89.5 v10" stroke="#2b2b2b" stroke-width="1.1"/>
<path d="M1179.5 93 l-7 7 M1179.5 97 l-5 5 M1172 100 l-3.5 4.5 h5 l1 -2.5" stroke="#e04e1b" stroke-width="1.1"/>
<path d="M1242 96 l2.5 2.5 l2.5 -2.5 M1255 124 l2.5 2.5 l2.5 -2.5" stroke="#2b2b2b" stroke-width="1.3"/>
<path d="M1164 129.5 h16 M1164 120.5 h16 M1167.5 117 v16 M1176.5 117 v16" stroke="#2b2b2b" stroke-width="1.2"/>
<path d="M1275.6 80 v65" stroke="#dcdcdc" stroke-width="1"/>
<!-- fill -->
<rect x="1297.5" y="88.5" width="18.5" height="19" stroke="#2b2b2b"/>
<path d="M1297.5 94.2 h5.5 M1310 94.2 h6 M1306.6 94.2 v8.5 M1303.3 99.5 l3.3 3.3 l3.3 -3.3" stroke="#2b2b2b"/>
<path d="M1319 123.5 l2.5 2.5 l2.5 -2.5 M1367 123.5 l2.5 2.5 l2.5 -2.5 M1415 123.5 l2.5 2.5 l2.5 -2.5 M1463 123.5 l2.5 2.5 l2.5 -2.5 M1511 123.5 l2.5 2.5 l2.5 -2.5 M1559 123.5 l2.5 2.5 l2.5 -2.5" stroke="#2b2b2b" stroke-width="1.3"/>
<!-- sigma -->
<path d="M1363 91.5 v-2.3 h-16.5 l7.5 8.5 l-7.5 8.7 h16.5 v-2.3" stroke="#2b2b2b"/>
<!-- sort -->
<path d="M1398 89.5 h4.5 v17.5 h-9.5 z M1396.5 94.5 h6 M1394.8 101.5 h7.7" stroke="#2b2b2b"/>
<path d="M1408.6 90.5 v15.5 M1405.2 102.5 l3.4 3.5 l3.4 -3.5" stroke="#1f5fff" stroke-width="1.2"/>
<!-- filter -->
<path d="M1442.5 89.5 h17.5 l-6.5 10.5 v8 l-4 0.8 v-8.8 z" stroke="#2b2b2b"/>
<path d="M1447 92.3 h8" stroke="#0c8a4a" stroke-width="1.2"/>
<!-- freeze -->
<rect x="1489.5" y="89.5" width="19.5" height="18.5" stroke="#2b2b2b"/>
<path d="M1489.5 90 l8 9 M1489.5 98.2 l8 9" stroke="#2b2b2b" stroke-width="1"/>
<path d="M1497.6 89 v19 M1489.5 98.2 h19.5" stroke="#0c8a4a" stroke-width="1.2"/>
<!-- search -->
<circle cx="1544.2" cy="95.2" r="7" stroke="#2b2b2b"/>
<path d="M1549.3 100.3 l7.7 7.7" stroke="#2b2b2b"/>
<!-- formula bar -->
<path d="M159.5 168.5 l4 4 l4 -4" stroke="#555" stroke-width="1"/>
<circle cx="214" cy="169" r="5.6" stroke="#333" stroke-width="1.1"/>
<path d="M211.5 167.5 h5 M211.5 170.5 h5 M218.2 173.2 l3.5 3.5" stroke="#333" stroke-width="1.1"/>
<path d="M244.5 164 c-1.5 -1 -3 0 -3.3 2 l-1.6 9 c-.3 1.6 -1.4 2 -2 1.4 M239.8 167.6 h4" stroke="#333" stroke-width="1.1"/><path d="M245.2 168.8 c1.5 -.6 2.2 .2 2.7 1.6 l1.6 4.6 c.4 1.2 1.2 1.6 2.2 1 M251.8 168.8 l-6.2 7.6" stroke="#333" stroke-width="1.1"/>
<path d="M265.5 162.5 v15" stroke="#d5d5d5" stroke-width="1"/>
<!-- corner triangle -->
<path d="M17 208.5 h7.5 v-7.5 z" fill="#666" stroke="none"/>
<!-- vscroll arrows -->
<path d="M1673.5 224 h7" stroke="#9a9a9a" stroke-width="1.3"/>
<path d="M1675 238.5 h5.5 l-2.75 -4.5 z" fill="#666" stroke="none"/>
<path d="M1674.5 899 h5.5 l-2.75 4.5 z" fill="#666" stroke="none"/>
<!-- bottom: sheet nav -->
<path d="M15.8 922.8 v9 M24 923 l-4.5 4.3 l4.5 4.3" stroke="#a0a0a0" stroke-width="1.7" stroke-linecap="butt"/>
<path d="M42.8 923 l-4.5 4.3 l4.5 4.3" stroke="#a0a0a0" stroke-width="1.7" stroke-linecap="butt"/>
<path d="M61.3 923 l4.5 4.3 l-4.5 4.3" stroke="#a0a0a0" stroke-width="1.7" stroke-linecap="butt"/>
<path d="M88.2 922.8 v9 M80 923 l4.5 4.3 l-4.5 4.3" stroke="#a0a0a0" stroke-width="1.7" stroke-linecap="butt"/>
<path d="M214.5 923.5 v9.5 M209.7 928.2 h9.6" stroke="#333" stroke-width="1.6"/>
<!-- hscroll arrows -->
<path d="M995 923 v8" stroke="#9a9a9a" stroke-width="1"/>
<path d="M1014.5 924 v5.5 l-4 -2.75 z" fill="#666" stroke="none"/>
<path d="M1647.5 924 v5.5 l4 -2.75 z" fill="#666" stroke="none"/>
<path d="M1666 923 v8" stroke="#9a9a9a" stroke-width="1"/>
<!-- status left -->
<text x="16.8" y="951.6" font-family="Liberation Sans" font-size="6" font-weight="bold" fill="#333" stroke="none">JS</text>
<path d="M23.8 948.2 h7 v2.2 M27.4 948.2 v10.2 h-8.8 v-3.6 h4.6" stroke="#333" stroke-width="1.1"/>
<path d="M45.5 946 v13" stroke="#cfcfcf" stroke-width="1"/>
<circle cx="67" cy="952" r="4.3" stroke="#22b422" stroke-width="3.4" fill="#fff"/>
<path d="M162.5 946.5 h-3.5 v12.5 h3.5 M159 946.5 h11.5 v3.5 M163.5 952 h7 M163.5 955 h7 M163.5 958.5 h7" stroke="#333" stroke-width="1.1"/>
<!-- status right -->
<path d="M1212 958.5 h-7.5 v-12 h15 v6.5 M1204.5 950.5 h15 M1204.5 954.5 h7.5 M1209.5 946.5 v12" stroke="#333" stroke-width="1.1"/>
<path d="M1216 953.2 l3.2 1.8 v3.6 l-3.2 1.8 l-3.2 -1.8 v-3.6 z" stroke="#333" stroke-width="1.1" fill="#ebe8e8"/>
<circle cx="1216" cy="956.8" r="1" stroke="#333" stroke-width=".9"/>
<path d="M1237 952.5 q7 -8 14.5 0 q-7.5 8 -14.5 0 z" stroke="#333" stroke-width="1.1"/>
<circle cx="1244.2" cy="952.5" r="2.2" stroke="#333" stroke-width="1.1"/>
<path d="M1276.5 950.3 v-3.8 h4.6 v3.8 h3.8 v4.6 h-3.8 v3.8 h-4.6 v-3.8 h-3.8 v-4.6 z" stroke="#333" stroke-width="1.1"/>
<rect x="1276.8" y="950.6" width="4" height="4" stroke="#333" stroke-width="1"/>
<path d="M1292 951 l2.5 2.5 l2.5 -2.5" stroke="#333" stroke-width="1.2"/>
<path d="M1313.5 946 v13" stroke="#cfcfcf" stroke-width="1"/>
<rect x="1329.5" y="948" width="12" height="10.6" stroke="#333" stroke-width="1.1"/>
<path d="M1329.5 951.5 h12 M1333.6 951.5 v7.1" stroke="#333" stroke-width="1.1"/>
<path d="M1361 948 h10.5 v7.8 h-10.5 M1361 947.5 v2 M1361 955 v3.7 h12.5 v-11.5" stroke="#333" stroke-width="1.1"/>
<path d="M1388.6 946 v13" stroke="#cfcfcf" stroke-width="1"/>
<path d="M1455 951 l2.8 2.8 l2.8 -2.8" stroke="#333" stroke-width="1.2"/>
<path d="M1478 952.5 h12" stroke="#333" stroke-width="1.8"/>
<path d="M1504 952.5 h53" stroke="#1f5fd8" stroke-width="1.5"/>
<path d="M1557 952.5 h53" stroke="#c4c4c4" stroke-width="1.2"/>
<circle cx="1557" cy="952.5" r="4.8" fill="#fff" stroke="#cfcfcf" stroke-width="1"/>
<circle cx="1557" cy="952.5" r="2.6" fill="#9a9a9a" stroke="none"/>
<path d="M1624 952.5 h11.5 M1629.75 946.8 v11.5" stroke="#333" stroke-width="1.8"/>
<path d="M1656 950.5 v-4 h4 M1669 950.5 v-4 h-4 M1656 954.5 v4 h4 M1669 954.5 v4 h-4 M1656.5 958 l4 -4 M1668.5 947 l-4 4" stroke="#333" stroke-width="1.1"/>
</svg>

</div></body></html>
